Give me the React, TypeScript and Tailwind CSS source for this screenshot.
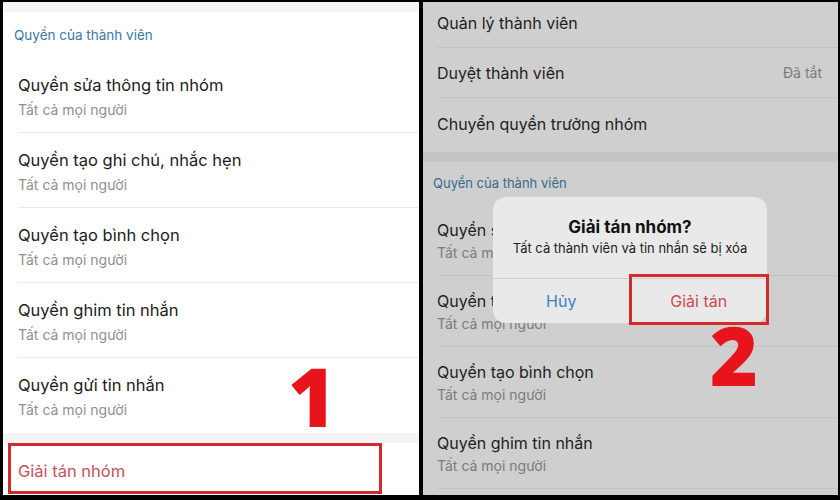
import React from 'react'

const font = { fontFamily: 'Inter, "Noto Sans", sans-serif' }

const leftRows = [
    'Quyền sửa thông tin nhóm',
    'Quyền tạo ghi chú, nhắc hẹn',
    'Quyền tạo bình chọn',
    'Quyền ghim tin nhắn',
    'Quyền gửi tin nhắn',
]

const rightRows = [
    'Quyền sửa thông tin nhóm',
    'Quyền tạo ghi chú, nhắc hẹn',
    'Quyền tạo bình chọn',
    'Quyền ghim tin nhắn',
]

function LeftPanel() {
    return (
        <div className="relative w-[416px] bg-white flex flex-col overflow-hidden">
            <div className="h-[10px] bg-[#f4f4f4]" />
            <div className="h-[46px] pl-[11px] pt-[14px] text-[13.5px] leading-[18px] text-[#3b7aa6]">
                Quyền của thành viên
            </div>
            {leftRows.map((r, i) => (
                <div key={r} className="pl-[15px] h-[75px] flex flex-col">
                    <div className="pt-[16px] text-[16.5px] leading-[22px] text-[#1c1c1c]">{r}</div>
                    <div className="mt-[3px] text-[14px] leading-[22px] text-[#8f8f8f]">Tất cả mọi người</div>
                    <div className="flex-1" />
                    {i < leftRows.length - 1 && <div className="h-px bg-[#ececec]" />}
                </div>
            ))}
            <div className="h-[10px] bg-[#f4f4f4]" />
            <div className="flex-1 flex items-center pl-[15px] pt-[4px] text-[16.5px] text-[#c4525c]">Giải tán nhóm</div>

            {/* annotation */}
            <div className="absolute left-[5px] top-[441px] w-[374px] h-[51px] border-[3px] border-[#d32a2a]" />
            <div className="absolute left-[285px] top-[352px] text-[82px] leading-none font-extrabold text-[#e8141c]" style={{ fontFamily: '"Open Sans", sans-serif' }}>
                1
            </div>
        </div>
    )
}

function RightPanel() {
    return (
        <div className="relative flex-1 bg-[#cfcfcf] flex flex-col overflow-hidden">
            <div className="-mt-[3px] h-[49px] pl-[14px] flex flex-col">
                <div className="flex-1 flex items-center text-[16px] text-[#1e1e1e]">Quản lý thành viên</div>
                <div className="h-px bg-[#c3c3c3]" />
            </div>
            <div className="h-[50px] pl-[14px] flex flex-col">
                <div className="flex-1 flex items-center justify-between pr-[16px] text-[16px] text-[#1e1e1e]">
                    <span>Duyệt thành viên</span>
                    <span className="text-[14px] text-[#7b7b7b]">Đã tắt</span>
                </div>
                <div className="h-px bg-[#c3c3c3]" />
            </div>
            <div className="h-[54px] pl-[14px] flex items-center pb-[2px] text-[16px] text-[#1e1e1e]">Chuyển quyền trưởng nhóm</div>
            <div className="h-[10px] bg-[#c4c4c4]" />
            <div className="h-[43px] pl-[10px] pt-[12px] text-[13px] leading-[18px] text-[#3a6a8e]">
                Quyền của thành viên
            </div>
            {rightRows.map((r) => (
                <div key={r} className="pl-[14px] h-[71px] flex flex-col">
                    <div className="pt-[14px] text-[16px] leading-[22px] text-[#1e1e1e]">{r}</div>
                    <div className="mt-[1px] text-[14px] leading-[22px] text-[#7b7b7b]">Tất cả mọi người</div>
                    <div className="flex-1" />
                    <div className="h-px bg-[#c3c3c3]" />
                </div>
            ))}

            {/* dialog */}
            <div className="absolute left-[70px] top-[195px] w-[274px] h-[126px] rounded-[13px] bg-[#e9e9e9] flex flex-col">
                <div className="h-[81px] flex flex-col items-center pt-[19px]">
                    <div className="text-[17px] leading-[22px] font-bold text-[#111]">Giải tán nhóm?</div>
                    <div className="mt-[1px] text-[13px] leading-[18px] text-[#222]">Tất cả thành viên và tin nhắn sẽ bị xóa</div>
                </div>
                <div className="h-px bg-[#cdcdcd]" />
                <div className="flex-1 flex">
                    <div className="flex-1 flex items-center justify-center text-[16px] text-[#3c80c6]">Hủy</div>
                    <div className="w-px bg-[#cdcdcd]" />
                    <div className="flex-1 flex items-center justify-center text-[16px] text-[#c94a52]">Giải tán</div>
                </div>
            </div>

            {/* annotation */}
            <div className="absolute left-[206px] top-[272px] w-[140px] h-[51px] border-[3px] border-[#d32a2a]" />
            <div className="absolute left-[287px] top-[311px] text-[82px] leading-none font-extrabold text-[#e8141c]" style={{ fontFamily: '"Open Sans", sans-serif' }}>
                2
            </div>
        </div>
    )
}

export default function App() {
    return (
        <div className="w-[840px] h-[500px] bg-black flex gap-[4px] pt-[2px] pb-[5px] pl-[3px] pr-[2px]" style={font}>
            <LeftPanel />
            <RightPanel />
        </div>
    )
}
